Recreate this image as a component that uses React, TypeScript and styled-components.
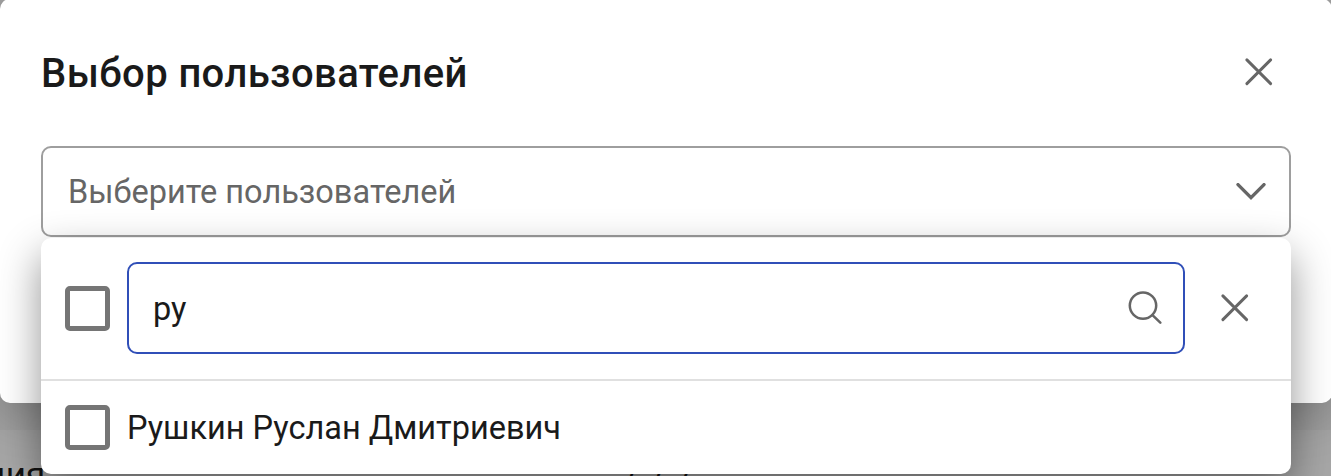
import React from "react";
import styled, { createGlobalStyle } from "styled-components";

const GlobalStyle = createGlobalStyle`
  * { box-sizing: border-box; }
  html, body { margin: 0; height: 100%; overflow: hidden; }
  body { font-family: Roboto, "Liberation Sans", sans-serif; background: #a7a7a7; }
`;

const Page = styled.div`
  position: relative;
  height: 476px;
  overflow: hidden;
  background: linear-gradient(#a2a2a2 430px, #a7a7a7 430px);
`;

const Behind = styled.div<{ $x: number; $y: number; $gap?: number }>`
  position: absolute;
  left: ${(p) => p.$x}px;
  top: ${(p) => p.$y}px;
  font-size: 35px;
  line-height: 40px;
  letter-spacing: ${(p) => p.$gap ?? 0}px;
  white-space: pre;
  color: #111;
`;

const Modal = styled.section`
  position: relative;
  height: 404px;
  margin: -1px -1px 0 0;
  padding: 49px 41px 0 41px;
  border-radius: 10px;
  background: #fff;
  box-shadow: 0 12px 50px rgba(0, 0, 0, 0.25);
`;

const Header = styled.header`
  display: flex;
  align-items: center;
  justify-content: space-between;
  height: 48px;
  padding-right: 18px;
`;

const Title = styled.h1`
  margin: 0;
  padding-top: 3px;
  font-size: 40px;
  line-height: 50px;
  font-weight: 500;
  letter-spacing: 0.39px;
  color: #1a1a1a;
`;

const Icon = styled.svg`
  display: block;
  flex: none;
  fill: none;
  stroke: #666;
  stroke-linecap: round;
`;

const Select = styled.div`
  position: relative;
  margin-top: 50px;
`;

const Field = styled.div<{ $active?: boolean }>`
  display: flex;
  align-items: center;
  justify-content: space-between;
  flex: 1;
  height: ${(p) => (p.$active ? 92 : 91)}px;
  padding: 0 ${(p) => (p.$active ? 21 : 23)}px 0 ${(p) => (p.$active ? 24 : 25)}px;
  border: 2px solid ${(p) => (p.$active ? "#304fb8" : "#9e9e9e")};
  border-radius: 10px;
  background: #fff;
  font-size: 32.5px;
  line-height: 44px;
  color: ${(p) => (p.$active ? "#1a1a1a" : "#666")};
`;

const Query = styled.span`
  padding-top: 2px;
`;

const Menu = styled.div`
  position: absolute;
  top: 92px;
  left: 0;
  right: 0;
  height: 236px;
  border-radius: 10px;
  background: #fff;
  box-shadow: 0 17px 42px rgba(0, 0, 0, 0.43);
`;

const SearchRow = styled.div`
  display: flex;
  align-items: center;
  height: 143px;
  padding: 0 42px 1px 24px;
  border-bottom: 2px solid #e0e0e0;
`;

const Option = styled.div`
  display: flex;
  align-items: center;
  height: 93px;
  padding: 0 24px;
  font-size: 32.5px;
  line-height: 44px;
  color: #1a1a1a;
`;

const Checkbox = styled.span`
  flex: none;
  width: 45px;
  height: 45px;
  margin-right: 17px;
  border: 5px solid #757575;
  border-radius: 5px;
`;

const Clear = styled.span`
  margin-left: 36px;
`;

const Cross = () => (
  <Icon width="28" height="28" viewBox="0 0 28 28" strokeWidth="2.9">
    <path d="M1.9 1.9 25.6 25.6M25.6 1.9 1.9 25.6" />
  </Icon>
);

export default function App() {
  return (
    <>
      <GlobalStyle />
      <Page>
        <Behind $x={-15} $y={456}>ция</Behind>
        <Behind $x={621} $y={465} $gap={2}>/ / /</Behind>
        <Modal>
          <Header>
            <Title>Выбор пользователей</Title>
            <Cross />
          </Header>
          <Select>
            <Field>
              <span>Выберите пользователей</span>
              <Icon width="30" height="18" viewBox="0 0 30 18" strokeWidth="3.4">
                <path d="M2 1.6 15 14.6 28 1.6" />
              </Icon>
            </Field>
            <Menu>
              <SearchRow>
                <Checkbox />
                <Field $active>
                  <Query>ру</Query>
                  <Icon width="34" height="34" viewBox="0 0 34 34" strokeWidth="2.5">
                    <circle cx="15" cy="14.6" r="13.2" />
                    <path d="m24.5 24.2 7.8 7.5" />
                  </Icon>
                </Field>
                <Clear>
                  <Cross />
                </Clear>
              </SearchRow>
              <Option>
                <Checkbox />
                <span>Рушкин Руслан Дмитриевич</span>
              </Option>
            </Menu>
          </Select>
        </Modal>
      </Page>
    </>
  );
}
